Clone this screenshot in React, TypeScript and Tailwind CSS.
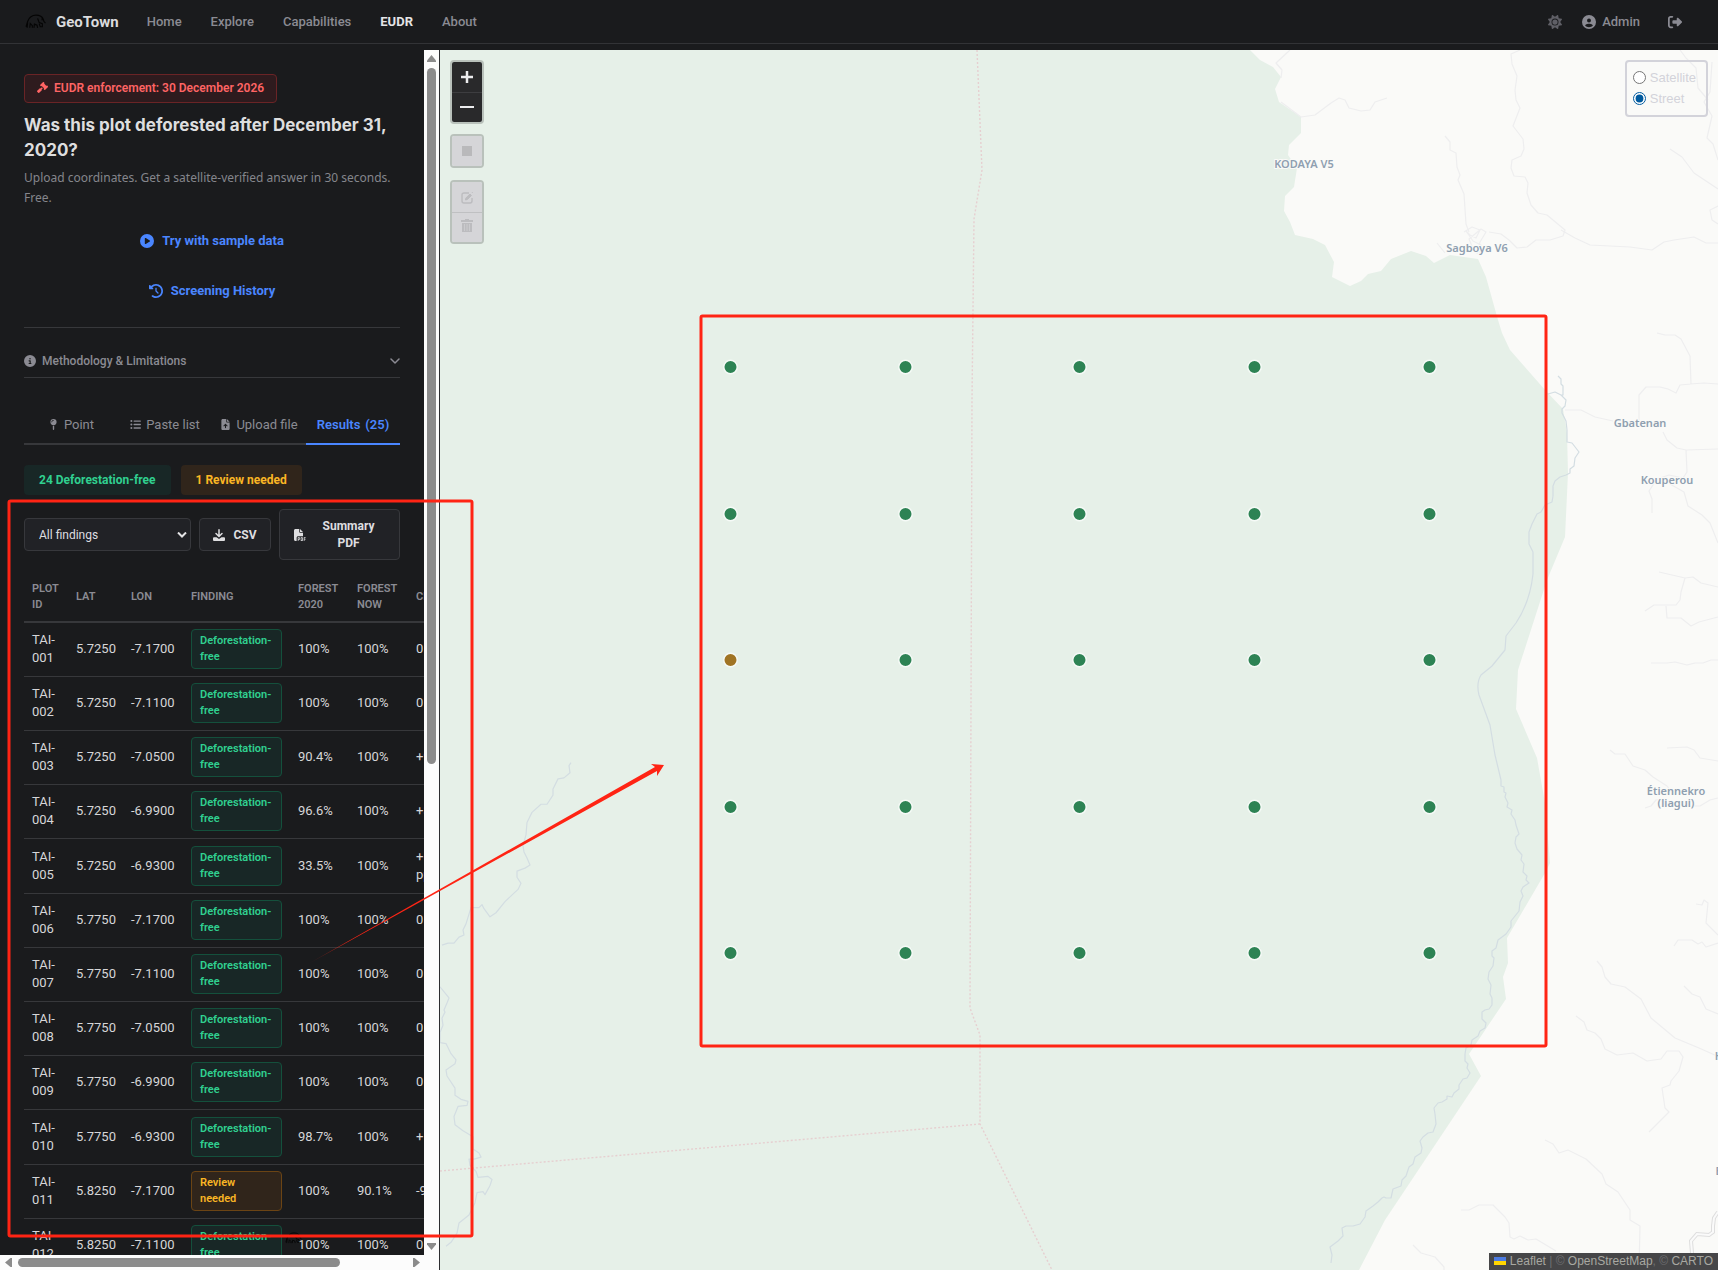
import React from "react";
import {
  FaGavel,
  FaCirclePlay,
  FaClockRotateLeft,
  FaCircleInfo,
  FaMapPin,
  FaListUl,
  FaFileArrowUp,
  FaFilePdf,
  FaSun,
  FaCircleUser,
  FaRightFromBracket,
} from "react-icons/fa6";

type Plot = { id: string; lat: string; lon: string; before: string; now: string; change: string; review?: boolean };

const plots: Plot[] = [
  { id: "TAI-001", lat: "5.7250", lon: "-7.1700", before: "100%", now: "100%", change: "0 pp" },
  { id: "TAI-002", lat: "5.7250", lon: "-7.1100", before: "100%", now: "100%", change: "0 pp" },
  { id: "TAI-003", lat: "5.7250", lon: "-7.0500", before: "90.4%", now: "100%", change: "+9.6 pp" },
  { id: "TAI-004", lat: "5.7250", lon: "-6.9900", before: "96.6%", now: "100%", change: "+3.4 pp" },
  { id: "TAI-005", lat: "5.7250", lon: "-6.9300", before: "33.5%", now: "100%", change: "+66.5 pp" },
  { id: "TAI-006", lat: "5.7750", lon: "-7.1700", before: "100%", now: "100%", change: "0 pp" },
  { id: "TAI-007", lat: "5.7750", lon: "-7.1100", before: "100%", now: "100%", change: "0 pp" },
  { id: "TAI-008", lat: "5.7750", lon: "-7.0500", before: "100%", now: "100%", change: "0 pp" },
  { id: "TAI-009", lat: "5.7750", lon: "-6.9900", before: "100%", now: "100%", change: "0 pp" },
  { id: "TAI-010", lat: "5.7750", lon: "-6.9300", before: "98.7%", now: "100%", change: "+1.3 pp" },
  { id: "TAI-011", lat: "5.8250", lon: "-7.1700", before: "100%", now: "90.1%", change: "-9.9 pp", review: true },
  { id: "TAI-012", lat: "5.8250", lon: "-7.1100", before: "100%", now: "100%", change: "0 pp" },
];

const markerColumns = [730.5, 905.5, 1079.5, 1254.5, 1429.5];
const markerRows = [367, 514, 660, 807, 953];

const forest =
  "M440 50L1250 50L1260 60L1273 67L1281 77L1275 89L1279 102L1301 117L1301 133L1289 145L1288 155L1297 168L1294 187L1285 196L1284 211L1290 222L1295 235L1313 239L1325 245L1334 262L1332 277L1350 286L1361 281L1368 274L1381 271L1391 259L1411 251L1426 256L1434 263L1450 255L1478 259L1486 277L1498 320L1502 333L1510 350L1546 391L1563 409L1567 433L1568 473L1565 537L1547 580L1518 670L1516 709L1537 758L1545 803L1550 863L1545 873L1507 938L1508 963L1503 977L1506 999L1469 1054L1481 1076L1385 1220L1359 1270L440 1270Z";

const eastRiver =
  "M1558 376l3 3v5l2 2v9l-2 0-6-3-7 2M1561 395l5 5-1 6-3 3 0 4 4 8 1 9 0 12 5 1 7 9-4 6-1 8-4 3 0 4-4 2-6 2-5 4-2 5v8L1553 496l-1 6-7 3-4 7-4 2-5 10-3 8v12l4 8v22Q1530 602 1516 623L1506 636l-1 14L1492 666L1481 675Q1476 683 1479 695L1490 725L1495 755L1501 780v6l3 1 0 5 2 1-1 4 3 6-1 4 5 3-1 4 4 6 1 5 3 9-3 3-1 6 2 6 5 6-1 5 3 4-1 8 4 4-1 4 3 3-6 4-2 4 2 5-3 6-1 9-8 10 0 6-5 7-8 6-2 8-4 3 0 5 2 2-1 8-4 6-1 7 3 6-1 9 2 4 0 7-3 4-4 1-3 2 0 7 4 4-1 5-5 3-2 5-6 4-1 5-5 3-1 6 0 7 3 3-1 4 3 5-3 5-4 1-4 6 0 4-5 4-2 4-5-1 0 3-5 3-4 1-4 5 1 6 1 10-3 8-5 1-5 4-3 4 2 7-1 5-6 4-2 7-4 3-3 9-4 4-1 6-8 3-2 9-5 0-2-1-2 1-4 4-5 4-7 5-1 6-5 7-7 2-7 0-4 2 1 8-5 5-8 6 2 8-1 8";

const westRiver =
  "M571 762l-2 3 1 7-6 5-6 1-5 10 0 6-6 9-6 0-9 8-5 10-1 12-3 11 1 6 3 6 3 7-5 3-8 3 0 6 4 6-3 6-13 12-9 11-6 4-6-8-2-4-3 3-8 0-5 16-3 6 1 5-5 2-5 6-6 0-6 2M440 983l9 11-2 5-3 7 1 2-3 6 1 7-3 7v10l6 1 5 10 5 6-1 4-9 6 1 6 8 12 0 7 6 4 7 2-1 4-9 1-4 10 1 8 8 6 10 6 0 12 6 4 2 4-7 2-5 0 1 6 6 6 2 6 10-1 4 3-2 6-5 9-2-3-6 1-2 10-6 12-10 8-2 10-6 9-5 4";

const roads = [
  "M1290 50l-14 13 6 7-1 8M1281 102l20 15 14-2 16-12 8-5 6 2 4 8 12 3 9-1 5-8 12-4",
  "M1520 50l-9 4 1 10 5 12-2 14 1 10 4 8-7 18 10 13 1 10-3 7-9 4-1 8 3 8 11 1 3 6-1 10 4 12 7 8 9 2 18 15-2 6-13 4-14 0-9 7-10 1-8-8-8-6-12-2",
  "M1445 136l5 6 0 8 6 3 1 14 3 8-2 5 6 14 2 30 3 8M1561 230l14 8 15 7 40 2 22 3 12-8 10-2 20-3 12 6 12 0",
  "M1680 50l6 8 10 10 2 20 10 12M1712 62l-2 30-6 10 8 14-5 22 6 6 5 16M1670 149l12 8 12 16 24 16M1718 206l-8 4 2 10 6 4",
  "M1657 333l8 2h10l6 4 9 17 1 28-11 1-4 8-8-4-8-2h-14l-7 8 0 25M1690 384l14-1 14 1M1565 410h16l14 7 18 4M1663 432l4 8 10 8 9 2 32-1M1686 450l1 22-4 6-14-3-12 4-8 12 3 8v14M1670 484l14 8 4 14 14 9 8 8 8 20",
  "M1659 572l26 6 8-1 8 6 17 4M1685 578l-4 14-1 8-4 5h-22l-9 6M1666 606l1 12h14l10 8 8-4 19-5M1651 663l16 0 8-1 12 3 8-2 8 0 8-3h7",
  "M1610 750l5 4h10l8 12 12 4 8 7 14 9 6 8M1667 748l20-1 7 3 6 8 18 3M1718 798l-8 2-10 6-8 0M1645 808l6-2 5-6 8-1",
  "M1696 904l6 1 2-5 4 3-2 20 12 12M1674 946l4-6 14 0 6 4 4-2 4 5 12-4M1597 961l5 6 3 10 6 7 14 3 16 12 10 19 24 20 24 10 18 8M1684 986l8 8 8 3 6 12 12 5M1576 1016l8 6 3 8 8 3 6 6 4 10 12 6 16-2 14 8 14-2 6-8 12 0 4 6-4 14-8 10-1 4-8 3 3 20 4 4-20 20",
  "M1545 1140l8 4 6 9 9-3 18 9 16 15 4 10 12 8 12 18 0 10 10 6-1 44M1461 1210l8 0 10-5h14l12 12 4 6 1 14 4 2 6-3 8 4 8-1 20 12M1413 1245l8 8 14 4 9 10v6",
  "M1464 232l8-5 8 3-4 8-6-3-4-4 7 10 8 4 0 7-7-1-5-12 12-10 5 3-6 10-3 12M1437 243l8 10",
];

const labels: [string, number, number][] = [
  ["KODAYA V5", 1304, 168],
  ["Sagboya V6", 1477, 252],
  ["Gbatenan", 1640, 427],
  ["Kouperou", 1667, 484],
  ["Étiennekro", 1676, 795],
  ["(liagui)", 1676, 807],
  ["H", 1719, 1060],
  ["B", 1719, 1175],
];

function Elephant({ className }: { className: string }) {
  return (
    <svg viewBox="0 0 20 14" className={className} fill="none" stroke="#050505" strokeWidth="1.1" aria-hidden="true">
      <path d="M1 12c.5-2 1-3 1.500-5C4 3 7 1 10.500 1c4 0 6 1.500 7 4l.5 2 1.500 1.500M2.500 8l-.5 5M4.500 13l.5-4 2 2v2M8.500 13l.5-3.500 2.500 1 .5 2.500M12 4l1.500 4 3 1v3h-2l-1-3M16 4l.5 2" />
    </svg>
  );
}

function Header() {
  const link = "text-[13px] font-medium text-[#8b8b93]";
  return (
    <header className="flex h-11 shrink-0 items-center border-b border-[#323336] pr-9 pl-[25px] font-medium">
      <a href="#" className="flex items-center gap-2.5 text-[15px] leading-5 font-bold text-[#dcdcde]">
        <Elephant className="h-[15px] w-[21px]" />
        GeoTown
      </a>
      <nav className="ml-7 flex items-center gap-[29px]">
        <a href="#" className={link}>Home</a>
        <a href="#" className={link}>Explore</a>
        <a href="#" className={link}>Capabilities</a>
        <a href="#" className="text-[13px] font-bold text-[#e4e4e6]">EUDR</a>
        <a href="#" className={link}>About</a>
      </nav>
      <div className="ml-auto flex items-center text-[#8b8b93]">
        <button aria-label="Toggle theme" className="text-[14px] text-[#5f5f66]"><FaSun /></button>
        <a href="#" className="ml-5 flex items-center gap-1.5 text-[13px]">
          <FaCircleUser className="text-[14px]" />
          Admin
        </a>
        <button aria-label="Sign out" className="ml-7 text-[14px]"><FaRightFromBracket /></button>
      </div>
    </header>
  );
}

function Tab({ icon, children }: { icon: React.ReactNode; children: React.ReactNode }) {
  return (
    <button role="tab" className="flex items-center justify-center gap-[5px] border-b-2 border-[#37383b] pt-1 text-[13px] whitespace-nowrap text-[#8b8b93]">
      <span className="text-[11px]">{icon}</span>
      {children}
    </button>
  );
}

function ResultsTable() {
  const head = "px-2 text-left font-semibold";
  const cell = "px-2 align-middle";
  return (
    <table className="mt-3 w-[448px] table-fixed border-collapse text-[13px] text-[#d6d6d8]">
      <colgroup>
        <col className="w-11" />
        <col className="w-[55px]" />
        <col className="w-15" />
        <col className="w-[107px]" />
        <col className="w-[59px]" />
        <col className="w-[59px]" />
        <col className="w-16" />
      </colgroup>
      <thead>
        <tr className="h-[50px] border-b-2 border-[#37383b] text-[11px] leading-4 text-[#8b8b93]">
          <th className={head}>PLOT ID</th>
          <th className={head}>LAT</th>
          <th className={head}>LON</th>
          <th className={head}>FINDING</th>
          <th className={head}>FOREST 2020</th>
          <th className={head}>FOREST NOW</th>
          <th className={head}>CHANGE</th>
        </tr>
      </thead>
      <tbody>
        {plots.map((p) => (
          <tr key={p.id} className="h-[54px] border-b border-[#37383b] leading-[18px] nth-[5n]:h-[55px]">
            <td className={cell}>{p.id}</td>
            <td className={cell}>{p.lat}</td>
            <td className={cell}>{p.lon}</td>
            <td className={cell}>
              <span
                className={
                  p.review
                    ? "block rounded border border-[#6b4414] bg-[#30251b] px-2 py-[3px] text-[11px] leading-4 font-semibold text-[#fbb624]"
                    : "block rounded border border-[#14503c] bg-[#182726] px-2 py-[3px] text-[11px] leading-4 font-semibold text-[#30d090]"
                }
              >
                {p.review ? <>Review<br />needed</> : <>Deforestation-<br />free</>}
              </span>
            </td>
            <td className={cell}>{p.before}</td>
            <td className={cell}>{p.now}</td>
            <td className={cell}>{p.change}</td>
          </tr>
        ))}
      </tbody>
    </table>
  );
}

function Sidebar() {
  const action = "flex h-[50px] items-center justify-center gap-2 pt-0.5 text-[13px] font-bold text-[#4a86ff]";
  const tool = "flex items-center rounded border border-[#37383c] bg-[#212226] text-[12px] font-bold text-[#dedee0]";
  return (
    <aside className="flex w-[440px] shrink-0 flex-col border-r border-[#2c2d30]">
      <div className="flex min-h-0 flex-1">
        <div className="min-w-0 flex-1 overflow-hidden px-6 pt-6">
          <div className="flex h-[29px] w-fit items-center gap-1.5 rounded border border-[#6a2426] bg-[#2e1b1e] px-3 pb-0.5 text-[12px] font-semibold text-[#ff6464]">
            <FaGavel className="text-[11px]" />
            EUDR enforcement: 30 December 2026
          </div>
          <h1 className="mt-2.5 font-['Inter',sans-serif] text-[17px] leading-[25px] font-bold text-[#dededf]">
            Was this plot deforested after December 31, 2020?
          </h1>
          <p className="mt-[5px] font-['Noto_Sans',sans-serif] text-[12px] leading-5 text-[#85868c]">
            Upload coordinates. Get a satellite-verified answer in 30 seconds. Free.
          </p>
          <div className="mt-[7px] flex flex-col items-center">
            <button className={action}><FaCirclePlay className="text-[14px]" />Try with sample data</button>
            <button className={action}><FaClockRotateLeft className="text-[14px]" />Screening History</button>
          </div>
          <button className="mt-3 flex h-[51px] w-full items-center gap-1.5 border-y border-[#37383b] pt-4 text-[12px] font-medium text-[#8b8b93]">
            <FaCircleInfo className="text-[12px]" />
            Methodology &amp; Limitations
            <svg viewBox="0 0 10 6" className="ml-auto h-1.5 w-2.5" fill="none" stroke="currentColor" strokeWidth="1.5" strokeLinecap="round" strokeLinejoin="round" aria-hidden="true">
              <path d="M1 1l4 4 4-4" />
            </svg>
          </button>
          <div role="tablist" className="mt-6 grid h-[43px] grid-cols-4">
            <Tab icon={<FaMapPin />}>Point</Tab>
            <Tab icon={<FaListUl />}>Paste list</Tab>
            <Tab icon={<FaFileArrowUp />}>Upload file</Tab>
            <button role="tab" aria-selected="true" className="flex items-center justify-center gap-[5px] border-b-2 border-[#4a86ff] pt-1 text-[13px] font-semibold text-[#4a86ff]">
              <span>Results</span>
              <span>(25)</span>
            </button>
          </div>
          <div className="mt-5 flex gap-2.5 text-[12px] font-bold">
            <span className="flex h-[30px] items-center rounded bg-[#182726] px-[15px] text-[#30d090]">24 Deforestation-free</span>
            <span className="flex h-[30px] items-center rounded bg-[#30251b] px-[15px] text-[#fbb624]">1 Review needed</span>
          </div>
          <div className="mt-3.5 flex items-center gap-2">
            <div className="relative w-[167px]">
              <select aria-label="Filter findings" className="h-[33px] w-full appearance-none rounded border border-[#37383c] bg-[#212226] px-3.5 text-[12px] text-[#dedee0]">
                <option>All findings</option>
              </select>
              <svg viewBox="0 0 10 6" className="pointer-events-none absolute top-3.5 right-1 h-1.5 w-2.5" fill="none" stroke="#e4e4e6" strokeWidth="2" aria-hidden="true">
                <path d="M1 .5l4 4 4-4" />
              </svg>
            </div>
            <button className={`${tool} h-[33px] w-[72px] justify-center gap-2`}>
              <svg viewBox="0 0 12 12" className="size-3" fill="none" stroke="currentColor" strokeWidth="1.5" strokeLinecap="round" strokeLinejoin="round" aria-hidden="true">
                <path d="M6 .8v6M3 4.500l3 3 3-3" />
                <path d="M0 9.200a1 1 0 0 1 1-1h2.500L6 10l2.500-1.800H11a1 1 0 0 1 1 1v1.800a1 1 0 0 1-1 1H1a1 1 0 0 1-1-1z" fill="currentColor" stroke="none" />
              </svg>
              CSV
            </button>
            <button className={`${tool} h-[51px] flex-1 pl-3.5`}>
              <FaFilePdf className="text-[12px]" />
              <span className="flex-1 pr-5 pl-3 text-center leading-[17px]">Summary PDF</span>
            </button>
          </div>
          <ResultsTable />
        </div>
        <div className="flex w-[15px] flex-col items-center bg-[#fcfcfc] py-[5px]">
          <svg viewBox="0 0 9 7" className="h-[7px] w-[9px] shrink-0" fill="#8b8b8b" aria-hidden="true"><path d="M4.500 0L9 5.500V7H0V5.500z" /></svg>
          <div className="mt-1.5 w-[9px] flex-[697] rounded-full bg-[#8b8b8b]" />
          <div className="flex-[479]" />
          <svg viewBox="0 0 9 7" className="h-[7px] w-[9px] shrink-0" fill="#8b8b8b" aria-hidden="true"><path d="M4.500 7L9 1.500V0H0v1.500z" /></svg>
        </div>
      </div>
      <div className="flex h-[15px] shrink-0 items-center bg-[#fcfcfc] pr-[19px] pl-[5px]">
        <svg viewBox="0 0 7 9" className="h-[9px] w-[7px]" fill="#8b8b8b" aria-hidden="true"><path d="M0 4.500L5.500 0H7v9H5.500z" /></svg>
        <div className="ml-1.5 h-[9px] flex-[321] rounded-full bg-[#8b8b8b]" />
        <div className="flex-[73]" />
        <svg viewBox="0 0 7 9" className="h-[9px] w-[7px]" fill="#8b8b8b" aria-hidden="true"><path d="M7 4.500L1.500 0H0v9h1.500z" /></svg>
      </div>
    </aside>
  );
}

function MapCanvas() {
  return (
    <svg viewBox="440 50 1278 1220" preserveAspectRatio="xMinYMin slice" className="absolute inset-0 size-full" role="img" aria-label="Map of screened plots">
      <path d={forest} fill="#e6f0e8" />
      <g fill="none" stroke="#eeeeef" strokeWidth="1.2" strokeLinejoin="round">
        {roads.map((d) => <path key={d} d={d} />)}
      </g>
      <path d="M1718 1212l-4 6-1 8 0 6-4 3-12-1-6 7 1 12 0 17" fill="none" stroke="#dedede" strokeWidth="4" />
      <path d="M1718 1212l-4 6-1 8 0 6-4 3-12-1-6 7 1 12 0 17" fill="none" stroke="#fafafa" strokeWidth="2" />
      <g fill="none" stroke="#d3dde2" strokeWidth="1.2" strokeLinejoin="round">
        <path d={eastRiver} />
        <path d={westRiver} transform="translate(0 -10) scale(1 1.014)" />
      </g>
      <g fill="none" stroke="#e6cfd0" strokeWidth="1.4" strokeDasharray="2 2">
        <path d="M977 50L982 170L974 219L972 400L970 1008L980 1035L980 1124L1052 1270" />
        <path d="M980 1124L440 1171" />
      </g>
      <g className="font-['Noto_Sans',sans-serif]" fill="#8f9fb0" stroke="#fafaf8" strokeWidth="2" paintOrder="stroke" fontSize="11" fontWeight="600" textAnchor="middle">
        {labels.map(([t, x, y]) => <text key={t} x={x} y={y}>{t}</text>)}
      </g>
      {markerRows.map((y, r) =>
        markerColumns.map((x, c) => (
          <circle key={`${x}-${y}`} cx={x} cy={y} r="6.75" fill={r === 2 && c === 0 ? "#a07424" : "#2d8354"} stroke="#f6faf7" strokeWidth="1.5" />
        )),
      )}
    </svg>
  );
}

function MapPanel() {
  const bar = "flex w-[34px] flex-col overflow-hidden rounded border-2 border-[#b9c1bb]";
  const off = "flex h-[30px] items-center justify-center bg-[#d5d5d8]";
  return (
    <main className="relative min-w-0 flex-1 overflow-hidden bg-[#fafaf8]">
      <MapCanvas />
      <div className="absolute top-2.5 left-2.5 flex flex-col">
        <div className={bar}>
          <button aria-label="Zoom in" className="flex h-[30px] items-center justify-center bg-[#29292b]">
            <svg viewBox="0 0 14 14" className="size-3.5" stroke="#ececee" strokeWidth="2.500" aria-hidden="true"><path d="M7 1v12M1 7h12" /></svg>
          </button>
          <button aria-label="Zoom out" className="flex h-[30px] items-center justify-center border-t border-[#3d3d40] bg-[#29292b] pb-0.5">
            <svg viewBox="0 0 14 14" className="size-3.5" stroke="#ececee" strokeWidth="2" aria-hidden="true"><path d="M0 7h14" /></svg>
          </button>
        </div>
        <div className={`${bar} mt-2.5`}>
          <button aria-label="Draw a rectangle" className={off}><span className="size-2.5 bg-[#b9b9bb]" /></button>
        </div>
        <div className={`${bar} mt-3`}>
          <button aria-label="Edit layers" className={off}>
            <svg viewBox="0 0 13 13" className="size-[13px]" fill="none" stroke="#bcbcbf" strokeWidth="1.4" strokeLinejoin="round" aria-hidden="true">
              <path d="M8 2H3Q1 2 1 4v6q0 2 2 2h6q2 0 2-2V7" />
              <path d="M4.500 9l.4-2 4-4 1.500 1.500-4 4zM11 1.200l.8.8" fill="#bcbcbf" strokeWidth="1" />
            </svg>
          </button>
          <button aria-label="Delete layers" className={`${off} border-t border-[#bfc0c2] pb-1`}>
            <svg viewBox="0 0 12 14" className="h-3.5 w-3" fill="#bcbcbf" aria-hidden="true">
              <path d="M4 0h4v1h4v2H0V1h4zM1 4h10v9H1z" />
              <path d="M3.500 5v7M6 5v7M8.500 5v7" stroke="#cfcfd2" strokeWidth=".8" />
            </svg>
          </button>
        </div>
      </div>
      <fieldset className="absolute top-2.5 right-2.5 flex flex-col rounded border-2 border-[#d3d3da] pt-[5px] pr-2.5 pb-1.5 pl-1.5 font-['Liberation_Sans',sans-serif] text-[13px] leading-[21px] text-[#d3d3da]">
        <label className="flex items-center gap-1"><input type="radio" name="base" className="size-[13px] accent-[#005a9e]" />Satellite</label>
        <label className="flex items-center gap-1"><input type="radio" name="base" defaultChecked className="size-[13px] accent-[#005a9e]" />Street</label>
      </fieldset>
      <footer className="absolute right-0 bottom-0 flex h-[17px] items-center gap-1 bg-[#464648] px-[5px] pb-0.5 font-['Liberation_Sans',sans-serif] text-[12px] whitespace-nowrap text-[#6f6f72]">
        <svg viewBox="0 0 12 8" className="h-2 w-3" aria-hidden="true"><path fill="#4c7be1" d="M0 0h12v4H0z" /><path fill="#ffd500" d="M0 4h12v4H0z" /></svg>
        <span>
          <a href="#" className="text-[#a8a8a2]">Leaflet</a> | © <a href="#" className="text-[#a8a8a2]">OpenStreetMap</a>, © <a href="#" className="text-[#a8a8a2]">CARTO</a>
        </span>
      </footer>
    </main>
  );
}

function Annotations() {
  return (
    <svg viewBox="0 0 1718 1270" preserveAspectRatio="xMinYMin meet" className="pointer-events-none absolute inset-0 size-full" aria-hidden="true">
      <defs>
        <linearGradient id="fade" gradientUnits="userSpaceOnUse" x1="300" y1="967" x2="345" y2="942">
          <stop offset="0" stopColor="#ff2414" stopOpacity="0" />
          <stop offset="1" stopColor="#ff2414" />
        </linearGradient>
      </defs>
      <g fill="none" stroke="#ff2414" strokeWidth="3" strokeLinejoin="round">
        <rect x="9" y="501" width="463" height="735" rx="1.5" />
        <rect x="701" y="316" width="845" height="730" rx="1.5" />
      </g>
      <path d="M308 964L655 767L651 764L664 765L657 776L657 771Z" fill="url(#fade)" />
    </svg>
  );
}

export default function App() {
  return (
    <div className="relative flex h-screen flex-col overflow-hidden bg-[#1a1b1d] font-['Roboto',sans-serif]">
      <Header />
      <div className="mt-1.5 flex min-h-0 flex-1">
        <Sidebar />
        <MapPanel />
      </div>
      <Elephant className="pointer-events-none absolute bottom-[26px] left-[285px] h-3 w-[17px]" />
      <Annotations />
    </div>
  );
}
